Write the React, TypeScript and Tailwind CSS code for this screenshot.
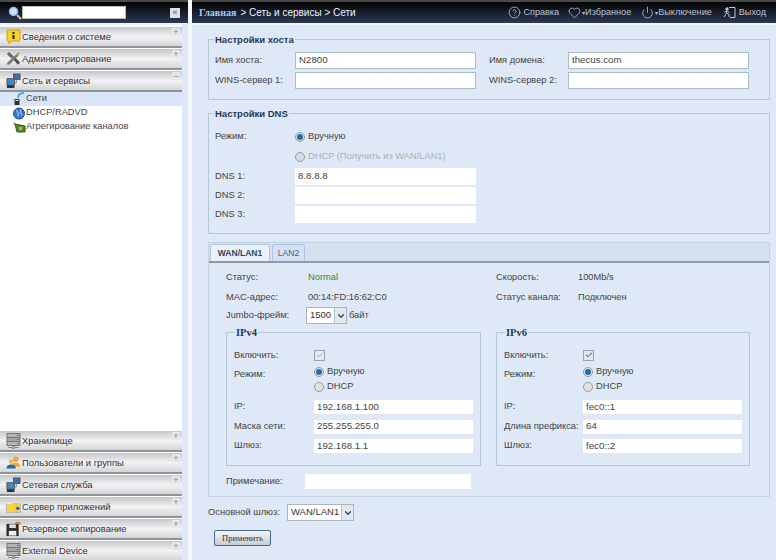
import { CircleHelp, Heart, Power, ChevronDown, Check } from "lucide-react";
import type { ReactNode } from "react";

function InfoIcon() {
  return (
    <svg width="15" height="16" viewBox="0 0 15 16">
      <path d="M2 1h11a1 1 0 0 1 1 1v9a1 1 0 0 1-1 1H6l-3 3v-3H2a1 1 0 0 1-1-1V2a1 1 0 0 1 1-1z" fill="#f5d327" stroke="#c9a40e" />
      <rect x="6.500" y="3" width="2" height="2" fill="#222" />
      <rect x="6.500" y="6" width="2" height="4" fill="#222" />
    </svg>
  );
}

function ToolsIcon() {
  return (
    <svg width="17" height="17" viewBox="0 0 17 17">
      <path d="M1 3.500L3.500 1l5 5-2.500 2.500z" fill="#666" />
      <path d="M7 8l2-2 7 7-2.500 2.500z" fill="#4a4a4a" />
      <path d="M12 3.500l2 2L5 14.500c-1 1.200-3 1.500-3.500.8S1.500 13 2.800 12z" fill="#7a7a7a" />
      <path d="M12.500 3l1.500-1.500L15.500 3 14 4.500z" fill="#5da83a" />
    </svg>
  );
}

function NetIcon() {
  return (
    <svg width="16" height="16" viewBox="0 0 16 16">
      <rect x="8" y="0.500" width="7" height="6" fill="#3f6fa8" stroke="#555" />
      <rect x="1" y="5.500" width="8" height="7" fill="#3f88c8" stroke="#555" />
      <rect x="1" y="12.500" width="8" height="3" fill="#333" />
      <path d="M11 7v3H9" stroke="#777" fill="none" />
    </svg>
  );
}

function StorageIcon() {
  return (
    <svg width="15" height="16" viewBox="0 0 15 16">
      <rect x="1" y="0.500" width="13" height="4" fill="#b5b5b5" stroke="#777" />
      <rect x="1" y="4.500" width="13" height="4" fill="#a5a5a5" stroke="#777" />
      <rect x="1" y="8.500" width="13" height="4" fill="#b5b5b5" stroke="#777" />
      <rect x="11" y="2" width="2" height="1" fill="#3b78c4" />
      <rect x="11" y="6" width="2" height="1" fill="#3b78c4" />
      <rect x="11" y="10" width="2" height="1" fill="#3b78c4" />
      <path d="M2 14.500h11" stroke="#888" />
      <circle cx="7.500" cy="14.500" r="1.300" fill="#ccc" stroke="#777" />
    </svg>
  );
}

function UsersIcon() {
  return (
    <svg width="16" height="15" viewBox="0 0 16 15">
      <circle cx="10.500" cy="4" r="3" fill="#f0a53a" />
      <path d="M6 12c0-3 2-4.500 4.500-4.500S15 9 15 12z" fill="#f0a53a" />
      <circle cx="5.500" cy="6.500" r="2.500" fill="#f3b65c" />
      <path d="M0.500 14c0-3 2-4.500 5-4.500s5 1.500 5 4.500z" fill="#2467b5" />
    </svg>
  );
}

function FolderIcon() {
  return (
    <svg width="16" height="15" viewBox="0 0 16 15">
      <path d="M0.500 2.500h6l1.500 2h7.500v9.500H0.500z" fill="#f6d33c" stroke="#b7b7b7" />
      <path d="M0.500 2.500h6l1.500 2H0.500z" fill="#eee" />
      <path d="M10 9.500l2.500-2 2.500 2-2.500 2z" fill="#2f64b0" />
    </svg>
  );
}

function BackupIcon() {
  return (
    <svg width="16" height="16" viewBox="0 0 16 16">
      <rect x="0.500" y="2.500" width="13" height="13" fill="#2b2b2b" />
      <rect x="3.500" y="3" width="7" height="4" fill="#ddd" />
      <rect x="3" y="10" width="8" height="5" fill="#eee" />
      <path d="M10 2.500C11 .8 13 .5 15 2l-1 .5" stroke="#e2662b" strokeWidth="1.500" fill="none" />
    </svg>
  );
}

function ExitIcon() {
  return (
    <svg width="13" height="13" viewBox="0 0 13 13" fill="none" stroke="#c3c9d4" strokeWidth="1">
      <path d="M6 1.500h6v10H7" />
      <circle cx="4" cy="3" r="1.200" fill="#c3c9d4" />
      <path d="M4 5l-1 3-2 3M4 7l2 1.500V11M1.500 6L4 5l2.500 1.500" />
    </svg>
  );
}

function GlobeIcon() {
  return (
    <svg width="12" height="13" viewBox="0 0 12 13">
      <circle cx="6" cy="6.500" r="5.500" fill="#3b78d0" stroke="#1c4d9a" />
      <path d="M3 3.500c2 1 3 3 2 6M8 2.500c-1 2 0 5 1.500 6" stroke="#cfe0f7" fill="none" />
    </svg>
  );
}

function PcIcon() {
  return (
    <svg width="13" height="14" viewBox="0 0 13 14">
      <rect x="1.500" y="7" width="5" height="6" fill="#333" />
      <rect x="2.500" y="8" width="3" height="1" fill="#ddd" />
      <path d="M5 6c0-3 2-5 6-5" stroke="#5aa6dd" strokeWidth="2" fill="none" />
      <circle cx="10" cy="4" r="1.500" fill="#bfe0f5" />
    </svg>
  );
}

function CardIcon() {
  return (
    <svg width="14" height="12" viewBox="0 0 14 12">
      <path d="M3 3l10 2v6H5z" fill="#4f8a2f" stroke="#2f5a1c" />
      <rect x="7" y="6" width="3" height="3" fill="#c9b23c" />
      <path d="M1 1l3 2v3z" fill="#555" />
    </svg>
  );
}

function MenuHeader({ icon, label, open }: { icon: ReactNode; label: string; open?: boolean }) {
  return (
    <div className="relative flex h-[21px] shrink-0 items-center gap-[1px] border-b-2 border-[#8d9499] bg-gradient-to-b from-[#c4c6c9] via-[#f2f2f3] to-[#d4d5d7] pl-[6px] text-[9.4px] text-[#333]">
      <span className="flex w-[15px] shrink-0 justify-center">{icon}</span>
      <span className="pt-[2px]">{label}</span>
      <span className="absolute right-[2px] top-[1px] flex h-[8px] w-[8px] items-center justify-center bg-[#e6e7e9] text-[9px] leading-none text-[#888]">
        {open ? "−" : "+"}
      </span>
    </div>
  );
}

function TreeItem({ icon, label, active }: { icon: ReactNode; label: string; active?: boolean }) {
  return (
    <div className={`flex h-[14px] items-center pl-[12px] text-[9.3px] text-[#444] ${active ? "bg-[#d9e6f8]" : ""}`}>
      <span className="flex w-[14px] shrink-0 justify-center">{icon}</span>
      <span>{label}</span>
    </div>
  );
}

function Sidebar() {
  return (
    <aside className="flex w-[188px] shrink-0 flex-col">
      <div className="flex h-[23px] shrink-0 items-center border-t-2 border-[#4a4a4a] bg-gradient-to-b from-[#050505] to-[#2c3a58] pl-[8px] pr-[8px]">
        <svg width="14" height="14" viewBox="0 0 14 14">
          <circle cx="5.500" cy="5.500" r="4" fill="#cfe2f7" stroke="#8fb6e4" strokeWidth="1.500" />
          <path d="M9 9l4 4" stroke="#e8c98a" strokeWidth="2" />
        </svg>
        <div className="h-[13px] w-[104px] border border-[#b9bdb0] bg-white" />
        <div className="ml-auto flex h-[10px] w-[10px] items-center justify-center bg-[#dfe2e8] text-[9px] leading-none text-[#555]">«</div>
      </div>
      <div className="flex h-[537px] flex-col gap-[1px] overflow-hidden border-r-[6px] border-t-2 border-r-[#dfe8f6] border-t-[#eef1f6] bg-white pt-[2px]">
        <MenuHeader icon={<InfoIcon />} label="Сведения о системе" />
        <MenuHeader icon={<ToolsIcon />} label="Администрирование" />
        <MenuHeader icon={<NetIcon />} label="Сеть и сервисы" open />
        <div className="-mt-[1px] h-[338px] shrink-0">
          <TreeItem icon={<PcIcon />} label="Сети" active />
          <TreeItem icon={<GlobeIcon />} label="DHCP/RADVD" />
          <TreeItem icon={<CardIcon />} label="Агрегирование каналов" />
        </div>
        <MenuHeader icon={<StorageIcon />} label="Хранилище" />
        <MenuHeader icon={<UsersIcon />} label="Пользователи и группы" />
        <MenuHeader icon={<NetIcon />} label="Сетевая служба" />
        <MenuHeader icon={<FolderIcon />} label="Сервер приложений" />
        <MenuHeader icon={<BackupIcon />} label="Резервное копирование" />
        <MenuHeader icon={<StorageIcon />} label="External Device" />
      </div>
    </aside>
  );
}

function TopBar() {
  return (
    <div className="flex h-[23px] shrink-0 items-center justify-between border-t-2 border-[#4a4a4a] bg-gradient-to-b from-[#050505] to-[#2c3a58] pl-[7px] pr-[10px] text-[9.100px] text-[#bcc3cf]">
      <div className="flex items-center text-[#f0f3f8]">
        <span className="font-['Liberation_Serif',serif] text-[10px] font-bold text-[#a9c8ea]">Главная</span>
        <span className="ml-[4px] text-[10px]">&gt; Сеть и сервисы &gt; Сети</span>
      </div>
      <div className="flex items-center">
        <CircleHelp size={13} strokeWidth={1.500} />
        <span className="ml-[2px] mr-[9px]">Справка</span>
        <Heart size={13} strokeWidth={1.500} />
        <span className="ml-[1px] mr-[10px]"><span className="text-[6px]">▾</span>Избранное</span>
        <Power size={13} strokeWidth={1.500} />
        <span className="ml-[1px] mr-[11px]"><span className="text-[6px]">▾</span>Выключение</span>
        <ExitIcon />
        <span className="ml-[3px]">Выход</span>
      </div>
    </div>
  );
}

function Box({ title, className, legendClass, children }: { title: string; className: string; legendClass?: string; children: ReactNode }) {
  return (
    <fieldset className={`border border-[#b6c7d8] ${className}`}>
      <legend className={`leading-[13px] text-[#1f3a57] ${legendClass ?? "ml-[5px] px-[1px] text-[9.5px] font-bold"}`}>{title}</legend>
      {children}
    </fieldset>
  );
}

function Input({ value, className }: { value?: string; className: string }) {
  return (
    <div className={`flex items-center bg-white pl-[3px] text-[9.7px] text-[#444] ${className}`}>{value}</div>
  );
}

function BorderInput({ value }: { value?: string }) {
  return (
    <div className="flex h-[17px] items-center border border-[#a9bfc4] bg-white pl-[3px] text-[9.7px] text-[#444]">{value}</div>
  );
}

function Radio({ checked, disabled, label }: { checked?: boolean; disabled?: boolean; label: string }) {
  return (
    <div className={`flex items-center gap-[3px] whitespace-nowrap text-[9.3px] ${disabled ? "text-[#a9b1ba]" : "text-[#444]"}`}>
      <span className={`flex h-[10px] w-[10px] items-center justify-center rounded-full border border-[#9a9a9a] ${disabled ? "bg-[#d7dce3]" : "bg-[#e2e2e2]"}`}>
        {checked && <span className="h-[6px] w-[6px] rounded-full bg-[#1a6fb5]" />}
      </span>
      {label}
    </div>
  );
}

function Select({ value, className }: { value: string; className: string }) {
  return (
    <div className={`flex h-[17px] border border-[#a9b5bd] bg-white text-[9.5px] text-[#333] ${className}`}>
      <span className="flex flex-1 items-center pl-[3px]">{value}</span>
      <span className="flex w-[12px] items-center justify-center border-l border-[#b5c0c8] bg-[#e3e8ef]">
        <ChevronDown size={10} strokeWidth={3} className="text-[#26457a]" />
      </span>
    </div>
  );
}

function IpBox({ title, enabled, rows, labelW, className, legendClass }: { title: string; enabled?: boolean; rows: string[][]; labelW: string; className: string; legendClass: string }) {
  return (
    <Box title={title} legendClass={legendClass} className={`h-[140px] text-[9.3px] text-[#444] ${className}`}>
      <div className="px-[7px] pt-[8px]">
        <div className="flex h-[16px] items-center">
          <span className={`pt-[2px] ${labelW}`}>Включить:</span>
          <span className={`flex h-[11px] w-[11px] items-center justify-center border border-[#9aa2ad] bg-[#e4e7ec] ${enabled ? "text-[#2a3f9a]" : "text-[#a8aec0]"}`}>
            <Check size={8} strokeWidth={3} />
          </span>
        </div>
        <div className="mt-[1px] flex">
          <span className={`flex h-[22px] items-center ${labelW}`}>Режим:</span>
          <div className="flex flex-col">
            <div className="flex h-[15px] items-center"><Radio checked label="Вручную" /></div>
            <div className="flex h-[15px] items-center"><Radio label="DHCP" /></div>
          </div>
        </div>
        <div className="mt-[6px] flex flex-col gap-[5.500px]">
          {rows.map(([label, value]) => (
            <div key={label} className="flex h-[14px] items-center">
              <span className={`whitespace-nowrap ${labelW}`}>{label}</span>
              <Input value={value} className="h-[14px] flex-1" />
            </div>
          ))}
        </div>
      </div>
    </Box>
  );
}

function Main() {
  return (
    <main className="flex min-w-0 flex-1 flex-col bg-[#dfe8f6]">
      <TopBar />
      <div className="flex flex-1 flex-col border-t-2 border-[#f1f4f9] pl-[16px] pr-[6px] pt-[8px] text-[9.3px] text-[#444]">
        <Box title="Настройки хоста" className="h-[67px] shrink-0">
          <div className="grid grid-cols-[80px_181px_13px_79px_181px] gap-y-[3px] pl-[6px] pt-[6px]">
            <span className="self-center">Имя хоста:</span>
            <BorderInput value="N2800" />
            <span />
            <span className="self-center">Имя домена:</span>
            <BorderInput value="thecus.com" />
            <span className="self-center">WINS-сервер 1:</span>
            <BorderInput />
            <span />
            <span className="self-center">WINS-сервер 2:</span>
            <BorderInput />
          </div>
        </Box>
        <Box title="Настройки DNS" className="mt-[7px] h-[127px] shrink-0">
          <div className="grid grid-cols-[80px_181px] pl-[6px] pt-[6px]">
            <span className="flex h-[22px] items-center">Режим:</span>
            <div className="flex h-[22px] items-center"><Radio checked label="Вручную" /></div>
            <span className="h-[18px]" />
            <div className="flex h-[18px] items-center"><Radio disabled label="DHCP (Получить из WAN/LAN1)" /></div>
          </div>
          <div className="mt-[2px] grid grid-cols-[80px_181px] gap-y-[2px] pl-[6px]">
            <span className="self-center">DNS 1:</span>
            <Input value="8.8.8.8" className="h-[17px]" />
            <span className="self-center">DNS 2:</span>
            <Input className="h-[17px]" />
            <span className="self-center">DNS 3:</span>
            <Input className="h-[17px]" />
          </div>
        </Box>
        <section className="mt-[8px] h-[255px] shrink-0 border border-[#c3d1e0]">
          <div className="flex h-[20px] items-end gap-[2px] border-b-2 border-[#8b99a8] bg-[#d5e1f0] pl-[1px]">
            <div className="flex h-[17px] w-[60px] items-center justify-center rounded-t-[3px] border border-b-0 border-[#b0c6de] bg-[#eaf1fa] text-[8.500px] font-bold text-[#33475c]">WAN/LAN1</div>
            <div className="flex h-[17px] w-[33px] items-center justify-center rounded-t-[3px] border border-b-0 border-[#a9c4e6] bg-[#d5e1f2] text-[8.500px] text-[#4c5e72]">LAN2</div>
          </div>
          <div className="px-[17px] pt-[4px]">
            <div className="grid h-[20px] grid-cols-[82px_188px_82px_1fr] items-center pt-[2px]">
              <span>Статус:</span>
              <span className="text-[#2e8b3a]">Normal</span>
              <span>Скорость:</span>
              <span>100Mb/s</span>
            </div>
            <div className="grid h-[20px] grid-cols-[82px_188px_82px_1fr] items-center pt-[1px]">
              <span>MAC-адрес:</span>
              <span>00:14:FD:16:62:C0</span>
              <span>Статус канала:</span>
              <span>Подключен</span>
            </div>
            <div className="flex h-[17px] items-center">
              <span className="w-[80px]">Jumbo-фрейм:</span>
              <Select value="1500" className="w-[41px]" />
              <span className="ml-[2px]">байт</span>
            </div>
            <div className="mt-[2px] flex gap-[15px]">
              <IpBox
                title="IPv4"
                labelW="w-[80px] shrink-0"
                className="w-[255px]"
                legendClass="ml-[8px] px-[1px] font-['Liberation_Serif',serif] text-[10.500px] font-bold"
                rows={[["IP:", "192.168.1.100"], ["Маска сети:", "255.255.255.0"], ["Шлюз:", "192.168.1.1"]]}
              />
              <IpBox
                title="IPv6"
                enabled
                labelW="w-[79px] shrink-0"
                className="w-[254px]"
                legendClass="ml-[8px] px-[1px] font-['Liberation_Serif',serif] text-[10.500px] font-bold"
                rows={[["IP:", "fec0::1"], ["Длина префикса:", "64"], ["Шлюз:", "fec0::2"]]}
              />
            </div>
            <div className="mt-[8px] flex h-[15px] items-center">
              <span className="w-[79px]">Примечание:</span>
              <Input className="h-[15px] w-[166px]" />
            </div>
          </div>
        </section>
        <div className="mt-[7px] flex h-[17px] shrink-0 items-center">
          <span className="w-[79px] whitespace-nowrap">Основной шлюз:</span>
          <Select value="WAN/LAN1" className="w-[67px]" />
        </div>
        <div className="mt-[9px] pl-[6px]">
          <button className="flex h-[16px] w-[57px] items-center justify-center rounded-[2px] border border-[#44688c] bg-gradient-to-b from-[#f4f5f7] to-[#c9ccd1] font-['Liberation_Serif',serif] text-[8.500px] text-[#333]">
            Применить
          </button>
        </div>
      </div>
    </main>
  );
}

export default function App() {
  return (
    <div className="flex h-[560px] w-[776px] overflow-hidden bg-[#dfe8f6] font-['Liberation_Sans',sans-serif]">
      <Sidebar />
      <div className="w-[4px] shrink-0 bg-[#f4f6fa]" />
      <Main />
    </div>
  );
}
